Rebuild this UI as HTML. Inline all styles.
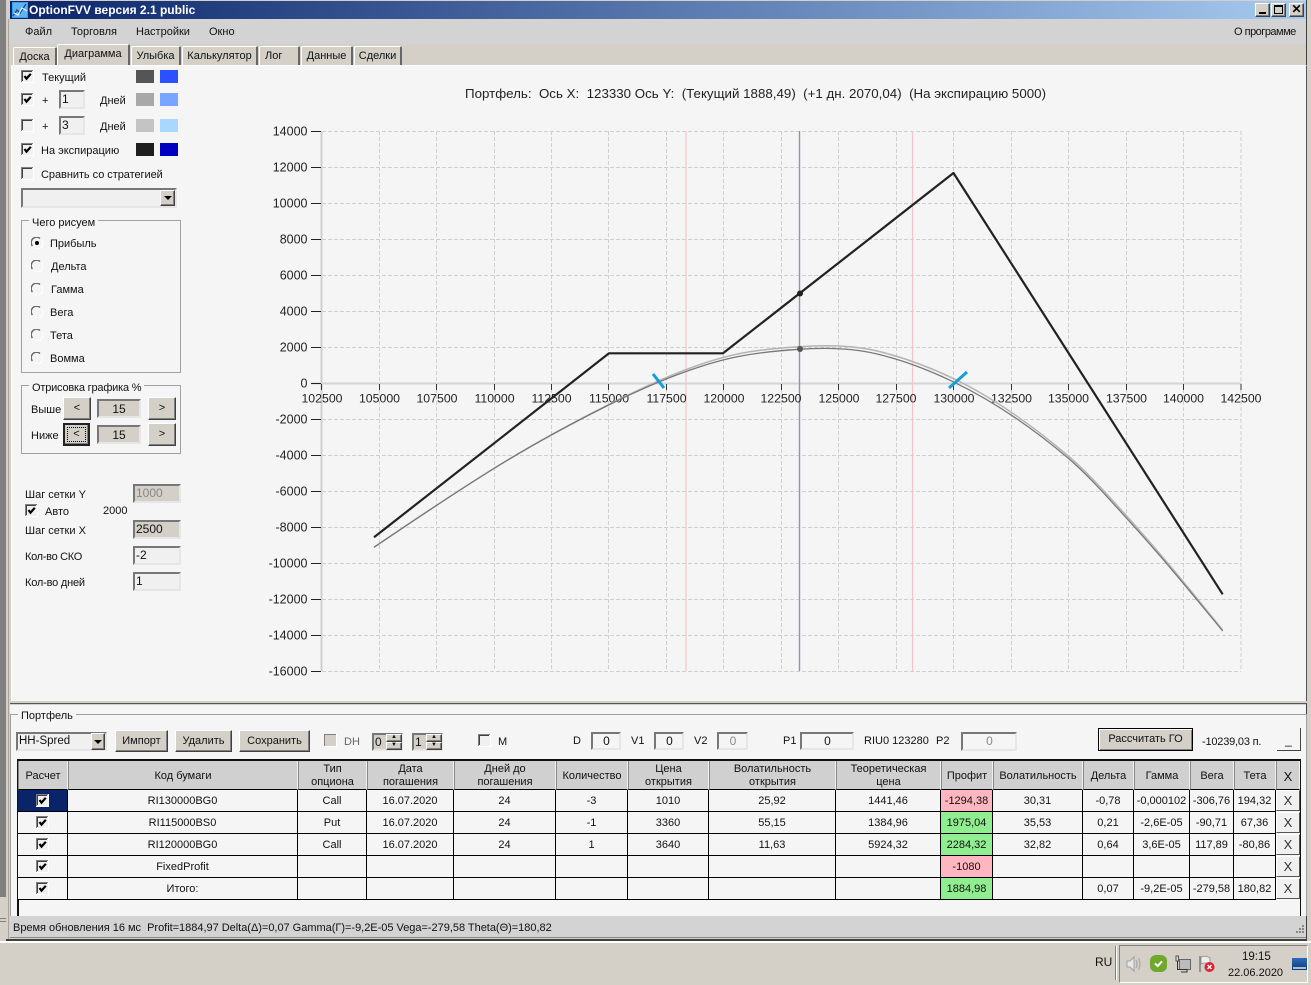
<!DOCTYPE html>
<html><head><meta charset="utf-8"><title>OptionFVV</title>
<style>
html,body{margin:0;padding:0;width:1311px;height:985px;overflow:hidden;background:#d4d0c8}
body{position:relative;font:11px "Liberation Sans","DejaVu Sans",sans-serif;color:#111}
div,svg.i,span.t{position:absolute;box-sizing:border-box}
.t{white-space:pre;line-height:14px}
.tab{background:#d4d0c8;border-top:1px solid #fff;border-left:1px solid #fff;border-right:2px solid #666;border-radius:2px 2px 0 0;text-align:center;line-height:18px;height:19px;top:46px}
.in{background:#f0f0f0;border:2px solid;border-color:#777 #e6e6e6 #e6e6e6 #777;line-height:15px;padding-left:1px;font-size:12px;white-space:pre}
.g{background:#d4d0c8}
.btn{background:#d4d0c8;border:1px solid;border-color:#fff #404040 #404040 #fff;box-shadow:inset -1px -1px 0 #808080;text-align:center}
.gb{border:1px solid #a0a0a0}
.gl{background:#f5f5f5;padding:0 3px;line-height:14px;white-space:pre}
table{position:absolute;left:18px;top:761px;border-collapse:separate;border-spacing:0;table-layout:fixed;width:1282px;font-size:11px}
th{height:29px;padding:2px 0 0;background:#d0d0d0;border-right:1px solid #f0f0f0;border-left:1px solid #888;border-bottom:1px solid #000;font-weight:normal;font-size:11px;line-height:13px;box-sizing:border-box}
td{height:22px;padding:0;text-align:center;border-right:1px solid #000;border-bottom:1px solid #000;box-sizing:border-box;background:#f5f5f5;white-space:nowrap;position:relative}
.p{background:#ffb6c1}.k{background:#90ee90}
td.x{border:0;background:#f5f5f5}
.xb{left:0;top:0;width:24px;height:21px;background:#f0f0f0;border:1px solid;border-color:#fff #555 #555 #fff;line-height:19px;text-align:center;font-size:13px;color:#333}
</style></head><body>
<svg width="0" height="0" style="position:absolute"><defs>
<symbol id="cb" viewBox="0 0 13 13"><rect width="13" height="13" fill="#fff"/><rect width="12" height="12" fill="#808080"/><rect x="1" y="1" width="11" height="11" fill="#f0f0f0"/><rect x="1" y="1" width="10" height="1" fill="#404040"/><rect x="1" y="1" width="1" height="10" fill="#404040"/></symbol>
<symbol id="ck" viewBox="0 0 13 13"><use href="#cb"/><path d="M3.5 6L5.5 8.6L9.8 3.8" fill="none" stroke="#000" stroke-width="2.2"/></symbol>
<symbol id="r" viewBox="0 0 12 12"><circle cx="6" cy="6" r="5.5" fill="#f4f4f4"/><path d="M1.4 9A5.4 5.4 0 0 1 9 1.4" fill="none" stroke="#666" stroke-width="1.4"/><path d="M10.6 3A5.4 5.4 0 0 1 3 10.6" fill="none" stroke="#fff" stroke-width="1"/></symbol>
</defs></svg>

<!-- desktop edges -->
<div style="left:0;top:0;width:6px;height:897px;background:#808080"></div>
<div style="left:0;top:918px;width:6px;height:1px;background:#808080"></div>
<div style="left:0;top:921px;width:6px;height:1px;background:#808080"></div>
<div style="left:6px;top:0;width:1301px;height:941px;background:#d4d0c8;border-right:1px solid #404040;border-bottom:2px solid #404040"></div>
<div style="left:8px;top:19px;width:1px;height:920px;background:#a8a49c"></div>
<div style="left:1307px;top:0;width:4px;height:941px;background:#d4d0c8"></div>
<div style="left:0;top:941px;width:1311px;height:2px;background:#fff"></div>

<!-- title -->
<div style="left:10px;top:1px;width:1296px;height:18px;background:linear-gradient(90deg,#0a246a,#a6caf0)"></div>
<svg class="i" style="left:12px;top:2px" width="16" height="16"><rect width="16" height="16" fill="#3a9cf0"/><rect x="1" y="1" width="14" height="14" fill="#5db4f4"/><path d="M1 14L5 8L8 11L14 2" fill="none" stroke="#1c4f9a" stroke-width="1.5"/><path d="M2 11L6 13L10 6L15 9" fill="none" stroke="#fff" stroke-width="1"/></svg>
<div class="t" style="left:29px;top:3px;color:#fff;font:bold 12px/14px 'Liberation Sans',sans-serif;white-space:pre">OptionFVV версия 2.1 public</div>
<div class="btn" style="left:1255px;top:3px;width:15px;height:14px"><div style="left:3px;top:8px;width:7px;height:2px;background:#000"></div></div>
<div class="btn" style="left:1271px;top:3px;width:15px;height:14px"><div style="left:2px;top:1px;width:9px;height:9px;border:1px solid #000;border-top-width:2px"></div></div>
<div class="btn" style="left:1289px;top:3px;width:15px;height:14px;font:bold 12px/11px 'Liberation Sans',sans-serif;color:#000">✕</div>

<!-- menu -->
<div style="left:10px;top:19px;width:1296px;height:25px;background:#d3d3d3"></div>
<div class="t" style="left:25px;top:25px">Файл</div>
<div class="t" style="left:71px;top:25px">Торговля</div>
<div class="t" style="left:136px;top:25px">Настройки</div>
<div class="t" style="left:209px;top:25px">Окно</div>
<div class="t" style="left:1234px;top:25px;letter-spacing:-.5px">О программе</div>

<!-- tabs -->
<div class="tab" style="left:13px;width:44px;top:47px;height:18px">Доска</div>
<div class="tab" style="left:57px;width:73px;top:44px;height:21px;background:#d4d0c8;line-height:19px">Диаграмма</div>
<div class="tab" style="left:131px;width:50px">Улыбка</div>
<div class="tab" style="left:182px;width:76px">Калькулятор</div>
<div class="tab" style="left:259px;width:41px;text-align:left;padding-left:5px">Лог</div>
<div class="tab" style="left:301px;width:52px">Данные</div>
<div class="tab" style="left:354px;width:48px">Сделки</div>

<!-- main panel -->
<div style="left:11px;top:65px;width:1296px;height:639px;background:#f5f5f5;border:1px solid;border-color:#fff #555 #555 #fff"></div>

<!-- left controls -->
<svg class="i" style="left:21px;top:70px" width="13" height="13"><use href="#ck"/></svg>
<div class="t" style="left:42px;top:71px">Текущий</div>
<div style="left:136px;top:70px;width:18px;height:13px;background:#555"></div>
<div style="left:160px;top:70px;width:18px;height:13px;background:#2a50ff"></div>

<svg class="i" style="left:21px;top:93px" width="13" height="13"><use href="#ck"/></svg>
<div class="t" style="left:42px;top:94px">+</div>
<div class="in" style="left:59px;top:90px;width:26px;height:19px">1</div>
<div class="t" style="left:100px;top:94px">Дней</div>
<div style="left:136px;top:93px;width:18px;height:13px;background:#a8a8a8"></div>
<div style="left:160px;top:93px;width:18px;height:13px;background:#78a5ff"></div>

<svg class="i" style="left:21px;top:119px" width="13" height="13"><use href="#cb"/></svg>
<div class="t" style="left:42px;top:120px">+</div>
<div class="in" style="left:59px;top:116px;width:26px;height:19px">3</div>
<div class="t" style="left:100px;top:120px">Дней</div>
<div style="left:136px;top:119px;width:18px;height:13px;background:#c4c4c4"></div>
<div style="left:160px;top:119px;width:18px;height:13px;background:#a8d8ff"></div>

<svg class="i" style="left:21px;top:143px" width="13" height="13"><use href="#ck"/></svg>
<div class="t" style="left:41px;top:144px">На экспирацию</div>
<div style="left:136px;top:143px;width:18px;height:13px;background:#1e1e1e"></div>
<div style="left:160px;top:143px;width:18px;height:13px;background:#0000c0"></div>

<svg class="i" style="left:21px;top:167px" width="13" height="13"><use href="#cb"/></svg>
<div class="t" style="left:41px;top:168px;letter-spacing:-.05px">Сравнить со стратегией</div>

<div class="in" style="left:21px;top:188px;width:156px;height:20px"></div>
<div class="btn" style="left:160px;top:190px;width:15px;height:16px"><div style="left:3px;top:5px;width:0;height:0;border:4px solid transparent;border-top:4px solid #000;border-bottom:0"></div></div>

<div class="gb" style="left:21px;top:220px;width:160px;height:153px"></div>
<div class="gl" style="left:29px;top:216px">Чего рисуем</div>
<svg class="i" style="left:31px;top:237px" width="12" height="12"><use href="#r"/><circle cx="6" cy="6" r="2" fill="#000"/></svg>
<div class="t" style="left:50px;top:237px">Прибыль</div>
<svg class="i" style="left:31px;top:260px" width="12" height="12"><use href="#r"/></svg>
<div class="t" style="left:51px;top:260px">Дельта</div>
<svg class="i" style="left:31px;top:283px" width="12" height="12"><use href="#r"/></svg>
<div class="t" style="left:51px;top:283px">Гамма</div>
<svg class="i" style="left:31px;top:306px" width="12" height="12"><use href="#r"/></svg>
<div class="t" style="left:50px;top:306px">Вега</div>
<svg class="i" style="left:31px;top:329px" width="12" height="12"><use href="#r"/></svg>
<div class="t" style="left:50px;top:329px">Тета</div>
<svg class="i" style="left:31px;top:352px" width="12" height="12"><use href="#r"/></svg>
<div class="t" style="left:50px;top:352px">Вомма</div>

<div class="gb" style="left:21px;top:385px;width:160px;height:69px"></div>
<div class="gl" style="left:29px;top:381px;letter-spacing:-.2px">Отрисовка графика %</div>
<div class="t" style="left:31px;top:403px">Выше</div>
<div class="btn" style="left:63px;top:397px;width:28px;height:23px;line-height:20px">&lt;</div>
<div class="in g" style="left:97px;top:399px;width:44px;height:19px;text-align:center;padding:0;line-height:16px">15</div>
<div class="btn" style="left:148px;top:397px;width:28px;height:23px;line-height:20px">&gt;</div>
<div class="t" style="left:31px;top:429px">Ниже</div>
<div class="btn" style="left:63px;top:423px;width:27px;height:23px;line-height:19px;border:2px solid #222"><div style="left:2px;top:2px;width:19px;height:15px;border:1px dotted #000"></div>&lt;</div>
<div class="in g" style="left:97px;top:425px;width:44px;height:19px;text-align:center;padding:0;line-height:16px">15</div>
<div class="btn" style="left:148px;top:423px;width:28px;height:23px;line-height:20px">&gt;</div>

<div class="t" style="left:25px;top:488px">Шаг сетки Y</div>
<div class="in g" style="left:133px;top:484px;width:48px;height:19px;color:#888">1000</div>
<svg class="i" style="left:25px;top:504px" width="13" height="13"><use href="#ck"/></svg>
<div class="t" style="left:45px;top:505px">Авто</div>
<div class="t" style="left:103px;top:504px">2000</div>
<div class="t" style="left:25px;top:524px">Шаг сетки X</div>
<div class="in g" style="left:133px;top:520px;width:48px;height:19px">2500</div>
<div class="t" style="left:25px;top:550px;letter-spacing:-.3px">Кол-во СКО</div>
<div class="in" style="left:133px;top:546px;width:48px;height:19px">-2</div>
<div class="t" style="left:25px;top:576px;letter-spacing:-.2px">Кол-во дней</div>
<div class="in" style="left:133px;top:572px;width:48px;height:19px">1</div>

<!-- chart -->
<svg class="i" style="left:0;top:0" width="1311" height="985" font-family="Liberation Sans, sans-serif" font-size="12" fill="#222">
<text x="465" y="98" textLength="581" xml:space="preserve" style="white-space:pre" font-size="13.3">Портфель:  Ось X:  123330 Ось Y:  (Текущий 1888,49)  (+1 дн. 2070,04)  (На экспирацию 5000)</text>
<g stroke="#cfcfcf" stroke-dasharray="4 2" fill="none">
<path d="M322 131.5H1241M322 167.5H1241M322 203.5H1241M322 239.5H1241M322 275.5H1241M322 311.5H1241M322 347.5H1241M322 419.5H1241M322 455.5H1241M322 491.5H1241M322 527.5H1241M322 563.5H1241M322 599.5H1241M322 635.5H1241M322 671.5H1241"/>
<path d="M379.5 131V671M436.5 131V671M494.5 131V671M551.5 131V671M608.5 131V671M666.5 131V671M723.5 131V671M781.5 131V671M838.5 131V671M896.5 131V671M953.5 131V671M1011.5 131V671M1068.5 131V671M1126.5 131V671M1183.5 131V671M1241 131V671"/>
</g>
<path d="M321.5 131V671" stroke="#cfcfcf" stroke-width="2"/>
<path d="M311 383.5H1241" stroke="#d4d4d4" stroke-width="2"/>
<path d="M686 131V671M912.5 131V671" stroke="#f4c4cc" stroke-width="1.2"/>
<path d="M799.5 131V671" stroke="#8c94b4" stroke-width="1.4"/>
<path d="M311 131.5H321M311 167.5H321M311 203.5H321M311 239.5H321M311 275.5H321M311 311.5H321M311 347.5H321M311 383.5H321M311 419.5H321M311 455.5H321M311 491.5H321M311 527.5H321M311 563.5H321M311 599.5H321M311 635.5H321M311 671.5H321" stroke="#222"/>
<path d="M321.5 384V390M379.5 384V390M436.5 384V390M494.5 384V390M551.5 384V390M608.5 384V390M666.5 384V390M723.5 384V390M781.5 384V390M838.5 384V390M896.5 384V390M953.5 384V390M1011.5 384V390M1068.5 384V390M1126.5 384V390M1183.5 384V390M1241 384V390" stroke="#333"/>
<g text-anchor="end" font-size="12.5">
<text x="307.5" y="135.5">14000</text><text x="307.5" y="171.5">12000</text><text x="307.5" y="207.5">10000</text><text x="307.5" y="243.5">8000</text><text x="307.5" y="279.5">6000</text><text x="307.5" y="315.5">4000</text><text x="307.5" y="351.5">2000</text><text x="307.5" y="387.5">0</text><text x="307.5" y="423.5">-2000</text><text x="307.5" y="459.5">-4000</text><text x="307.5" y="495.5">-6000</text><text x="307.5" y="531.5">-8000</text><text x="307.5" y="567.5">-10000</text><text x="307.5" y="603.5">-12000</text><text x="307.5" y="639.5">-14000</text><text x="307.5" y="675.5">-16000</text>
</g>
<g text-anchor="middle" font-size="12.3">
<text x="322" y="402.5">102500</text><text x="379.5" y="402.5">105000</text><text x="437" y="402.5">107500</text><text x="494.5" y="402.5">110000</text><text x="551.5" y="402.5">112500</text><text x="609" y="402.5">115000</text><text x="666.5" y="402.5">117500</text><text x="724" y="402.5">120000</text><text x="781" y="402.5">122500</text><text x="839" y="402.5">125000</text><text x="896" y="402.5">127500</text><text x="954" y="402.5">130000</text><text x="1011.5" y="402.5">132500</text><text x="1068.5" y="402.5">135000</text><text x="1126.5" y="402.5">137500</text><text x="1183.5" y="402.5">140000</text><text x="1241" y="402.5">142500</text>
</g>
<path fill="none" stroke="#b4b4b4" stroke-width="1.5" d="M374 547.3C414.2 520 454.5 492.9 494.7 468C532.7 444.4 570.7 423.5 608.7 404.5C646.8 385.5 684.9 367.8 723 357.5C748.3 350.6 773.7 348.4 799 346.7C824.3 345 849.7 345 875 350.5C901 356.5 927 366 953 378.3C991.4 396.7 1029.9 423.4 1068.3 456C1087.8 472.6 1107.2 494.5 1126.7 516C1145.6 536.8 1164.4 559 1183.3 581.7C1196.4 597.4 1209.6 614 1222.7 630"/>
<path fill="none" stroke="#787878" stroke-width="1.3" d="M374 547.3C414.2 520 454.5 492.9 494.7 468C532.7 444.4 570.7 424 608.7 405C646.8 386 684.9 369.9 723 360C748.3 353.4 773.7 351.1 799 349.3C824.3 347.5 849.7 347.7 875 353.5C901 359.5 927 369.2 953 381.7C991.4 400.1 1029.9 425.7 1068.3 458.3C1087.8 474.9 1107.2 496.8 1126.7 518.3C1145.6 539.1 1164.4 560.6 1183.3 583.3C1196.4 599 1209.6 615 1222.7 631"/>
<polyline fill="none" stroke="#222" stroke-width="2.2" stroke-linejoin="round" points="374,537.3 609,353.3 723,353.3 953.5,173 1222.7,594.3"/>
<circle cx="800" cy="293.5" r="3" fill="#222"/><circle cx="800" cy="349" r="3" fill="#555"/>
<path d="M653 374L664 388M949 388L967 372" stroke="#159fd6" stroke-width="3" fill="none"/>
</svg>

<!-- portfolio -->
<div style="left:10px;top:701px;width:1297px;height:3px;background:#d4d0c8;border-bottom:1px solid #555"></div>
<div style="left:10px;top:705px;width:1296px;height:211px;background:#f5f5f5"></div>
<div style="left:10px;top:714px;width:1297px;height:1px;background:#a0a0a0"></div>
<div style="left:10px;top:714px;width:1px;height:202px;background:#a0a0a0"></div>
<div style="left:1306px;top:714px;width:1px;height:202px;background:#a0a0a0"></div>
<div class="gl" style="left:18px;top:709px">Портфель</div>
<div class="in" style="left:16px;top:732px;width:91px;height:19px;font-size:11.5px">HH-Spred</div>
<div class="btn" style="left:91px;top:733px;width:14px;height:17px"><div style="left:2px;top:6px;width:0;height:0;border:4px solid transparent;border-top:4px solid #000;border-bottom:0"></div></div>
<div class="btn" style="left:115px;top:730px;width:53px;height:22px;line-height:20px">Импорт</div>
<div class="btn" style="left:175px;top:730px;width:57px;height:22px;line-height:20px">Удалить</div>
<div class="btn" style="left:239px;top:730px;width:71px;height:22px;line-height:20px">Сохранить</div>
<svg class="i" style="left:324px;top:734px" width="13" height="13"><rect width="13" height="13" fill="#fff"/><rect width="12" height="12" fill="#808080"/><rect x="1" y="1" width="11" height="11" fill="#d4d0c8"/></svg>
<div class="t" style="left:344px;top:735px;color:#666">DH</div>
<div class="in g" style="left:372px;top:733px;width:31px;height:18px;line-height:14px">0</div>
<div class="btn" style="left:386px;top:734px;width:16px;height:8px;font-size:6px;line-height:5px">▲</div>
<div class="btn" style="left:386px;top:742px;width:16px;height:8px;font-size:6px;line-height:5px">▼</div>
<div class="in g" style="left:412px;top:733px;width:31px;height:18px;line-height:14px">1</div>
<div class="btn" style="left:426px;top:734px;width:16px;height:8px;font-size:6px;line-height:5px">▲</div>
<div class="btn" style="left:426px;top:742px;width:16px;height:8px;font-size:6px;line-height:5px">▼</div>
<svg class="i" style="left:478px;top:734px" width="13" height="13"><use href="#cb"/></svg>
<div class="t" style="left:498px;top:735px">M</div>
<div class="t" style="left:573px;top:734px">D</div>
<div class="in" style="left:591px;top:732px;width:30px;height:18px;text-align:center;background:#f5f5f5">0</div>
<div class="t" style="left:631px;top:734px">V1</div>
<div class="in" style="left:654px;top:732px;width:30px;height:18px;text-align:center;background:#f5f5f5">0</div>
<div class="t" style="left:694px;top:734px">V2</div>
<div class="in" style="left:717px;top:732px;width:31px;height:18px;text-align:center;color:#888;background:#f5f5f5">0</div>
<div class="t" style="left:783px;top:734px">P1</div>
<div class="in" style="left:800px;top:732px;width:54px;height:18px;text-align:center;background:#f5f5f5">0</div>
<div class="t" style="left:864px;top:734px">RIU0 123280</div>
<div class="t" style="left:936px;top:734px">P2</div>
<div class="in" style="left:961px;top:732px;width:56px;height:19px;text-align:center;color:#888;background:#f5f5f5">0</div>
<div class="btn" style="left:1098px;top:728px;width:95px;height:23px;border:1px solid #000;line-height:20px;box-shadow:inset 1px 1px 0 #fff,inset -1px -1px 0 #808080">Рассчитать ГО</div>
<div class="t" style="left:1202px;top:735px;letter-spacing:-.2px">-10239,03 п.</div>
<div style="left:1277px;top:728px;width:24px;height:23px;border-right:1px solid #444;border-bottom:1px solid #444;text-align:center;line-height:24px;font-size:12px">_</div>

<div style="left:17px;top:759px;width:1284px;height:157px;background:#f5f5f5;border:solid #111;border-width:2px 1px 0 2px"></div>
<table>
<colgroup><col style="width:50px"><col style="width:230px"><col style="width:69px"><col style="width:87px"><col style="width:102px"><col style="width:72px"><col style="width:81px"><col style="width:127px"><col style="width:105px"><col style="width:52px"><col style="width:90px"><col style="width:51px"><col style="width:56px"><col style="width:44px"><col style="width:42px"><col style="width:24px"></colgroup>
<tr><th>Расчет</th><th>Код бумаги</th><th>Тип<br>опциона</th><th>Дата<br>погашения</th><th>Дней до<br>погашения</th><th>Количество</th><th>Цена<br>открытия</th><th>Волатильность<br>открытия</th><th>Теоретическая<br>цена</th><th>Профит</th><th>Волатильность</th><th>Дельта</th><th>Гамма</th><th>Вега</th><th>Тета</th><th style="font-size:13px">X</th></tr>
<tr><td style="background:#0a246a"><svg width="13" height="13" style="vertical-align:middle"><use href="#ck"/></svg></td><td>RI130000BG0</td><td>Call</td><td>16.07.2020</td><td>24</td><td>-3</td><td>1010</td><td>25,92</td><td>1441,46</td><td class="p">-1294,38</td><td>30,31</td><td>-0,78</td><td>-0,000102</td><td>-306,76</td><td>194,32</td><td class="x"><div class="xb">X</div></td></tr>
<tr><td><svg width="13" height="13" style="vertical-align:middle"><use href="#ck"/></svg></td><td>RI115000BS0</td><td>Put</td><td>16.07.2020</td><td>24</td><td>-1</td><td>3360</td><td>55,15</td><td>1384,96</td><td class="k">1975,04</td><td>35,53</td><td>0,21</td><td>-2,6E-05</td><td>-90,71</td><td>67,36</td><td class="x"><div class="xb">X</div></td></tr>
<tr><td><svg width="13" height="13" style="vertical-align:middle"><use href="#ck"/></svg></td><td>RI120000BG0</td><td>Call</td><td>16.07.2020</td><td>24</td><td>1</td><td>3640</td><td>11,63</td><td>5924,32</td><td class="k">2284,32</td><td>32,82</td><td>0,64</td><td>3,6E-05</td><td>117,89</td><td>-80,86</td><td class="x"><div class="xb">X</div></td></tr>
<tr><td><svg width="13" height="13" style="vertical-align:middle"><use href="#ck"/></svg></td><td>FixedProfit</td><td></td><td></td><td></td><td></td><td></td><td></td><td></td><td class="p">-1080</td><td></td><td></td><td></td><td></td><td></td><td class="x"><div class="xb">X</div></td></tr>
<tr><td><svg width="13" height="13" style="vertical-align:middle"><use href="#ck"/></svg></td><td>Итого:</td><td></td><td></td><td></td><td></td><td></td><td></td><td></td><td class="k">1884,98</td><td></td><td>0,07</td><td>-9,2E-05</td><td>-279,58</td><td>180,82</td><td class="x"><div class="xb">X</div></td></tr>
</table>

<!-- status -->
<div style="left:10px;top:916px;width:1296px;height:22px;background:#d3d3d3;border-bottom:1px solid #888"></div>
<div class="t" style="left:13px;top:921px;letter-spacing:-.02px">Время обновления 16 мс  Profit=1884,97 Delta(Δ)=0,07 Gamma(Γ)=-9,2E-05 Vega=-279,58 Theta(Θ)=180,82</div>
<svg class="i" style="left:1293px;top:924px" width="12" height="12" fill="#888"><rect x="9" y="1" width="2" height="2"/><rect x="6" y="4" width="2" height="2"/><rect x="9" y="4" width="2" height="2"/><rect x="3" y="7" width="2" height="2"/><rect x="6" y="7" width="2" height="2"/><rect x="9" y="7" width="2" height="2"/></svg>

<!-- taskbar -->
<div class="t" style="left:1095px;top:955px;font-size:12px">RU</div>
<div style="left:1115px;top:946px;width:2px;height:34px;background:#808080;border-right:1px solid #fff"></div>
<div style="left:1119px;top:945px;width:189px;height:38px;border:1px solid;border-color:#808080 #fff #fff #808080"></div>
<svg class="i" style="left:1126px;top:955px" width="16" height="18" fill="none"><path d="M1 6H4L8 2V16L4 12H1Z" fill="#e8e8e8" stroke="#a0a0a0"/><path d="M10 5Q12 9 10 13M12.5 3Q15.5 9 12.5 15" stroke="#a8a8a8" stroke-width="1.2"/></svg>
<svg class="i" style="left:1150px;top:955px" width="17" height="17"><rect width="17" height="17" rx="6" fill="#6fa82c"/><path d="M5 8.5L7.7 11L12 6.3" fill="none" stroke="#fff" stroke-width="2"/></svg>
<svg class="i" style="left:1174px;top:955px" width="18" height="18" fill="none"><rect x="5.5" y="4.5" width="11" height="10" fill="#bbb" stroke="#666"/><rect x="2" y="1" width="2.5" height="5" fill="#ddd" stroke="#555"/><path d="M3.5 6V14.5H13V17H7" stroke="#333"/></svg>
<svg class="i" style="left:1198px;top:955px" width="18" height="18" fill="none"><path d="M2 1V17" stroke="#777" stroke-width="1.4"/><path d="M3 2Q8 0 12 3V9Q7 7 3 9Z" fill="#eee" stroke="#999"/><circle cx="11.5" cy="12" r="5" fill="#e02030"/><path d="M9.5 10L13.5 14M13.5 10L9.5 14" stroke="#fff" stroke-width="1.4"/></svg>
<div class="t" style="left:1242px;top:950px;font-size:11.5px">19:15</div>
<div class="t" style="left:1228px;top:966px;font-size:11px">22.06.2020</div>
<svg class="i" style="left:1292px;top:958px" width="15" height="13"><defs><linearGradient id="mo" x1="0" y1="0" x2="0" y2="1"><stop offset="0" stop-color="#2a6bc0"/><stop offset="1" stop-color="#123a70"/></linearGradient></defs><rect width="15" height="12" fill="url(#mo)"/><rect x="1" y="9" width="13" height="2" fill="#9fc0e0"/></svg>
</body></html>
